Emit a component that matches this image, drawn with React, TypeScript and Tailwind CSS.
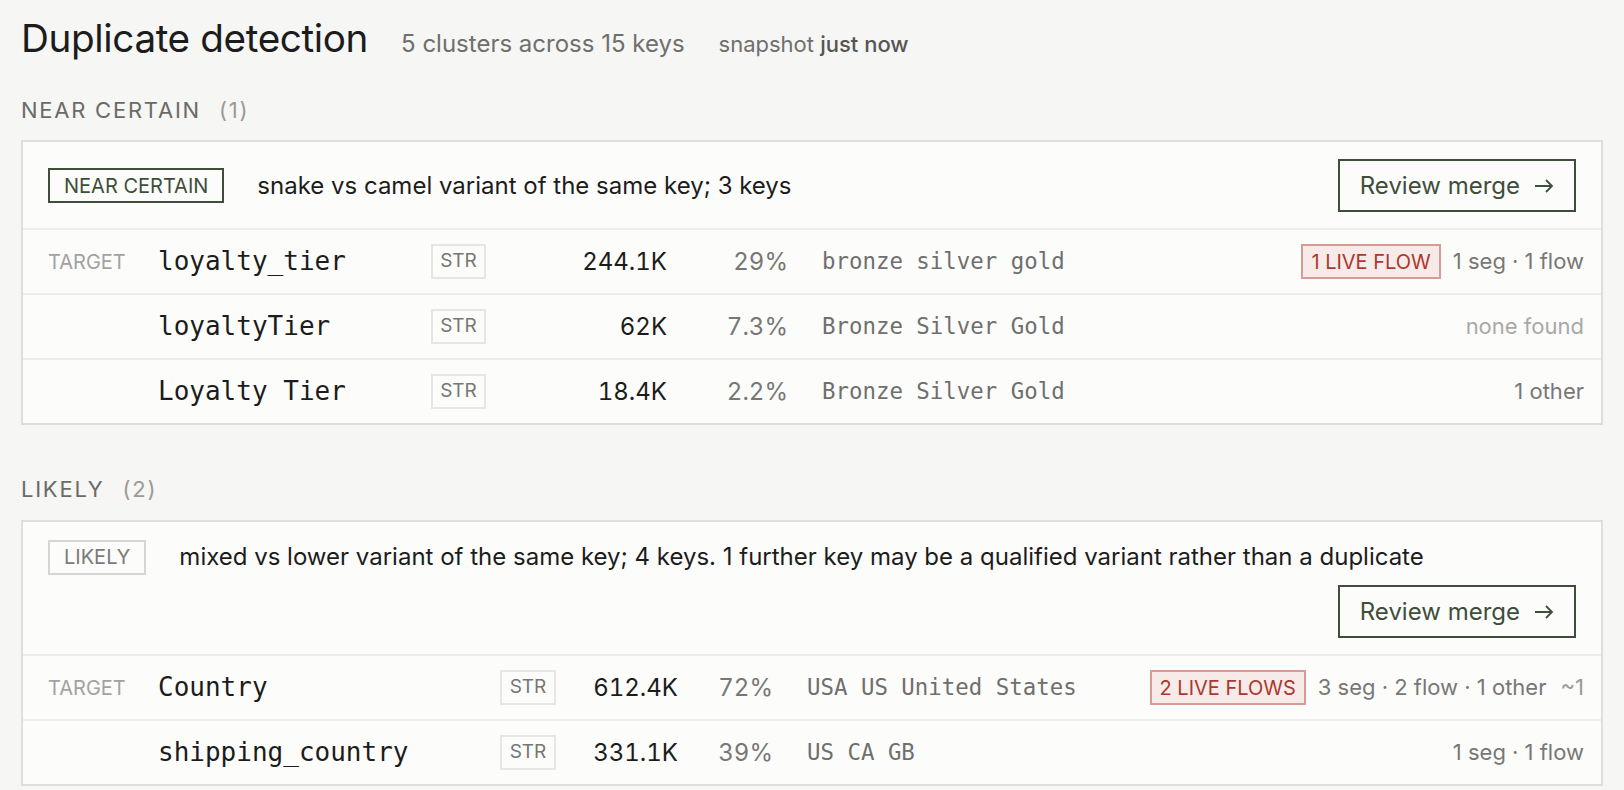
import * as React from 'react';

type Row = {
  target?: boolean;
  name: string;
  count: string;
  pct: string;
  samples: string;
  flows?: string;
  usage: string;
  usageMuted?: boolean;
  extra?: string;
};

type Cluster = {
  confidence: 'near' | 'likely';
  label: string;
  count: number;
  description: string;
  cols: string;
  samplesPad: string;
  rows: Row[];
};

const clusters: Cluster[] = [
  {
    confidence: 'near',
    label: 'Near certain',
    count: 1,
    description: 'snake vs camel variant of the same key; 3 keys',
    cols: 'grid-cols-[110px_273px_55px_181px_121px_1fr_auto]',
    samplesPad: 'pl-[34px]',
    rows: [
      {
        target: true,
        name: 'loyalty_tier',
        count: '244.1K',
        pct: '29%',
        samples: 'bronze silver gold',
        flows: '1 live flow',
        usage: '1 seg · 1 flow',
      },
      {
        name: 'loyaltyTier',
        count: '62K',
        pct: '7.3%',
        samples: 'Bronze Silver Gold',
        usage: 'none found',
        usageMuted: true,
      },
      {
        name: 'Loyalty Tier',
        count: '18.4K',
        pct: '2.2%',
        samples: 'Bronze Silver Gold',
        usage: '1 other',
      },
    ],
  },
  {
    confidence: 'likely',
    label: 'Likely',
    count: 2,
    description:
      'mixed vs lower variant of the same key; 4 keys. 1 further key may be a qualified variant rather than a duplicate',
    cols: 'grid-cols-[110px_342px_56px_122px_95px_1fr_auto]',
    samplesPad: 'pl-[34px]',
    rows: [
      {
        target: true,
        name: 'Country',
        count: '612.4K',
        pct: '72%',
        samples: 'USA US United States',
        flows: '2 live flows',
        usage: '3 seg · 2 flow · 1 other',
        extra: '~1',
      },
      {
        name: 'shipping_country',
        count: '331.1K',
        pct: '39%',
        samples: 'US CA GB',
        usage: '1 seg · 1 flow',
      },
    ],
  },
];

const mono = "font-['DejaVu_Sans_Mono',monospace]";

export default function App() {
  return (
    <div className="min-h-screen bg-[#f6f6f4] px-[21px] pt-[15px] pb-10 font-['Inter',sans-serif] text-[#1c1c1c]">
      <div className="flex items-baseline">
        <h1 className="text-[38.7px] leading-[46px] font-normal tracking-[-0.01em]">
          Duplicate detection
        </h1>
        <span className="ml-[33px] text-[24px] text-[#6f6f6d]">
          5 clusters across 15 keys
        </span>
        <span className="ml-[34px] text-[22px] text-[#6f6f6d]">
          snapshot <span className="font-medium text-[#555553]">just now</span>
        </span>
      </div>

      {clusters.map((cluster, i) => (
        <section key={cluster.label} className={i === 0 ? 'mt-[34px]' : 'mt-[50px]'}>
          <div className="flex items-baseline text-[22px] leading-[28px] tracking-[0.08em]">
            <span className="uppercase text-[#6a6a68]">{cluster.label}</span>
            <span className="ml-[18px] text-[#9a9a98]">({cluster.count})</span>
          </div>
          <div className={`${i === 0 ? 'mt-[16px]' : 'mt-[17px]'} border-2 border-[#dededc] bg-[#fcfcfb]`}>
            <ClusterHeader cluster={cluster} />
            {cluster.rows.map((row) => (
              <KeyRow key={row.name} row={row} cols={cluster.cols} samplesPad={cluster.samplesPad} />
            ))}
          </div>
        </section>
      ))}
    </div>
  );
}

function ClusterHeader({ cluster }: { cluster: Cluster }) {
  const badgeClass =
    cluster.confidence === 'near'
      ? 'border-[#3f4e3b] text-[#3f4e3b]'
      : 'border-[#d6d6d4] text-[#7a7a78]';

  return (
    <div className="flex flex-wrap items-center justify-between gap-y-[10px] pt-[17px] pr-[25px] pb-[16px] pl-[25px]">
      <div className="flex items-center">
        <span
          className={`flex h-[35px] items-center border-2 px-[14px] text-[20px] uppercase ${badgeClass}`}
        >
          {cluster.label}
        </span>
        <span className="ml-[33px] text-[24px]">{cluster.description}</span>
      </div>
      <button className="ml-auto flex h-[53px] items-center gap-[14px] border-2 border-[#3f4e3b] px-[20px] text-[24px] text-[#3f4e3b]">
        Review merge
        <svg width="20" height="14" viewBox="0 0 20 14" fill="none" stroke="currentColor" strokeWidth="1.8">
          <path d="M1 7h17M12 1l6 6-6 6" />
        </svg>
      </button>
    </div>
  );
}

function KeyRow({ row, cols, samplesPad }: { row: Row; cols: string; samplesPad: string }) {
  return (
    <div
      className={`grid ${cols} h-[65px] items-center border-t-2 border-[#ededeb] pr-[17px] pl-[25px]`}
    >
      <span className="text-[20px] uppercase text-[#a2a2a0]">{row.target ? 'Target' : ''}</span>
      <span className={`${mono} text-[26px] text-[#1c1c1c]`}>{row.name}</span>
      <span className="flex h-[35px] items-center justify-center border-2 border-[#e6e6e4] text-[19px] text-[#767674]">
        STR
      </span>
      <span className="text-right text-[24px] tabular-nums text-[#1c1c1c]">{row.count}</span>
      <span className="text-right text-[24px] tabular-nums text-[#777775]">{row.pct}</span>
      <span className={`${mono} ${samplesPad} whitespace-pre text-[22.4px] text-[#6f6f6d]`}>
        {row.samples}
      </span>
      <span className="flex items-center justify-end gap-[12px] text-[22px]">
        {row.flows && (
          <span className="flex h-[35px] items-center border-2 border-[#d79a94] bg-[#f7ebe9] px-[8px] text-[20px] uppercase text-[#ad372d]">
            {row.flows}
          </span>
        )}
        <span className={row.usageMuted ? 'text-[#a9a9a7]' : 'text-[#777775]'}>{row.usage}</span>
        {row.extra && <span className="ml-[2px] text-[#9a9a98]">{row.extra}</span>}
      </span>
    </div>
  );
}
